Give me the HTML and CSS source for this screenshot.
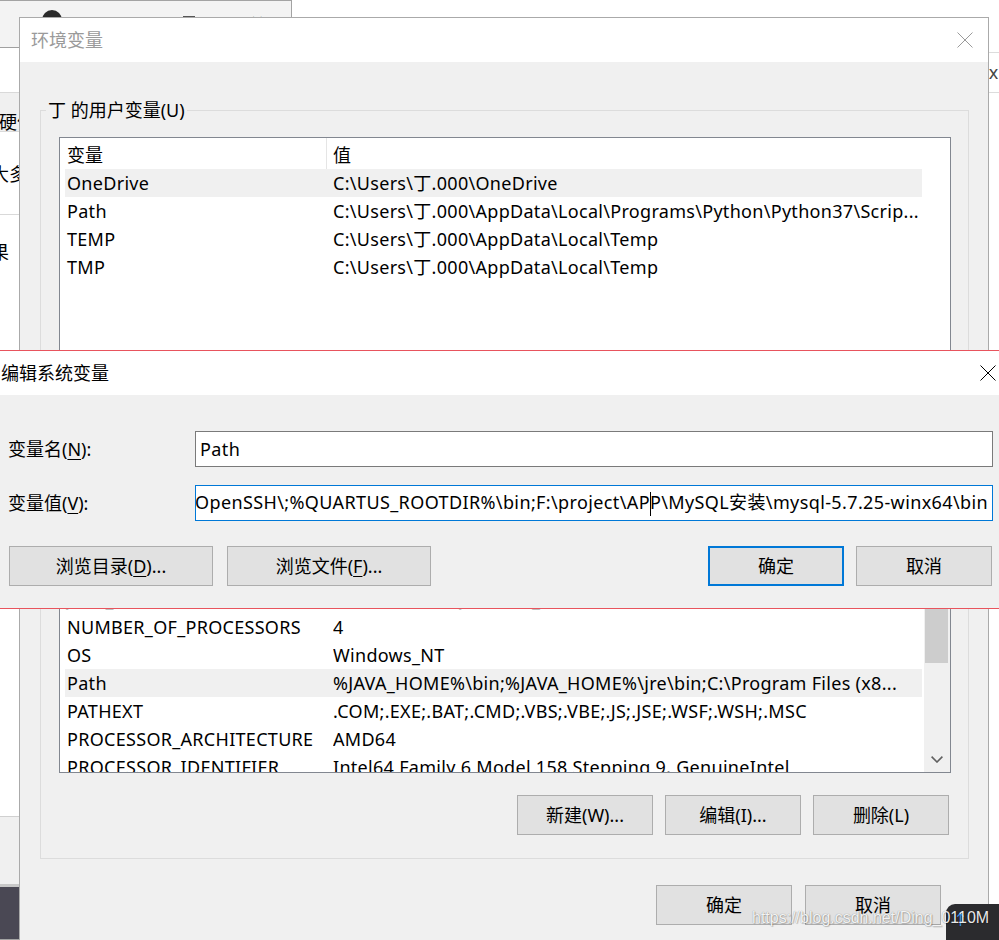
FILE: index.html
```html
<!DOCTYPE html>
<html lang="zh-CN">
<head>
<meta charset="utf-8">
<title>编辑系统变量</title>
<link rel="stylesheet" href="styles.css">
</head>
<body>
<div class="desk">

  <div class="bg-left">
    <div class="bl-title">
      <span class="bl-circle"></span>
      <span class="bl-square"></span>
      <span class="bl-x">×</span>
    </div>
    <div class="bl-white"></div>
    <div class="bl-tabs"><span class="bl-txt t1">硬件</span></div>
    <div class="bl-row r1"><span class="bl-txt t2">大多</span></div>
    <div class="bl-row r2"><span class="bl-txt t3">果</span></div>
    <div class="bl-fill"></div>
    <div class="bl-gray"></div>
    <div class="bl-dark"></div>
  </div>

  <div class="bg-right">
    <div class="br-row"><span class="br-txt">ıx</span></div>
  </div>

  <div class="win env">
    <div class="titlebar env-title">
      <span class="title inactive">环境变量</span>
      <svg class="close env-close" width="16" height="16" viewBox="0 0 16 16"><path d="M0.5 0.5 L15.5 15.5 M15.5 0.5 L0.5 15.5" stroke="#9a9a9a" stroke-width="1" fill="none"/></svg>
    </div>
    <div class="env-body">
      <div class="group user-group">
        <div class="group-label">丁 的用户变量(U)</div>
        <div class="list user-list">
          <div class="list-main">
            <div class="lhead"><div class="hc1">变量</div><div class="hc2">值</div></div>
            <div class="lrow sel"><span class="c1">OneDrive</span><span class="c2">C:\Users\丁.000\OneDrive</span></div>
            <div class="lrow"><span class="c1">Path</span><span class="c2">C:\Users\丁.000\AppData\Local\Programs\Python\Python37\Scrip...</span></div>
            <div class="lrow"><span class="c1">TEMP</span><span class="c2">C:\Users\丁.000\AppData\Local\Temp</span></div>
            <div class="lrow"><span class="c1">TMP</span><span class="c2">C:\Users\丁.000\AppData\Local\Temp</span></div>
          </div>
        </div>
        <div class="btnrow">
          <button class="btn">新建(N)...</button>
          <button class="btn">编辑(E)...</button>
          <button class="btn">删除(D)</button>
        </div>
      </div>

      <div class="group sys-group">
        <div class="group-label">系统变量(S)</div>
        <div class="list sys-list">
          <div class="list-main">
            <div class="lhead"><div class="hc1">变量</div><div class="hc2">值</div></div>
            <div class="lrow"><span class="c1">ComSpec</span><span class="c2">C:\WINDOWS\system32\cmd.exe</span></div>
            <div class="lrow"><span class="c1">DriverData</span><span class="c2">C:\Windows\System32\Drivers\DriverData</span></div>
            <div class="lrow"><span class="c1">JAVA_HOME</span><span class="c2">D:\SOFTWARE\JDK1.8.0_191</span></div>
            <div class="lrow"><span class="c1">NUMBER_OF_PROCESSORS</span><span class="c2">4</span></div>
            <div class="lrow"><span class="c1">OS</span><span class="c2">Windows_NT</span></div>
            <div class="lrow sel"><span class="c1">Path</span><span class="c2">%JAVA_HOME%\bin;%JAVA_HOME%\jre\bin;C:\Program Files (x8...</span></div>
            <div class="lrow"><span class="c1">PATHEXT</span><span class="c2">.COM;.EXE;.BAT;.CMD;.VBS;.VBE;.JS;.JSE;.WSF;.WSH;.MSC</span></div>
            <div class="lrow"><span class="c1">PROCESSOR_ARCHITECTURE</span><span class="c2">AMD64</span></div>
            <div class="lrow"><span class="c1">PROCESSOR_IDENTIFIER</span><span class="c2">Intel64 Family 6 Model 158 Stepping 9, GenuineIntel</span></div>
          </div>
          <div class="vscroll">
            <div class="sb-btn"></div>
            <div class="sb-thumb"></div>
            <div class="sb-track"></div>
            <div class="sb-btn sb-down">
              <svg width="12" height="7" viewBox="0 0 12 7"><path d="M0.6 0.6 L6 6 L11.4 0.6" stroke="#606060" stroke-width="1.6" fill="none"/></svg>
            </div>
          </div>
        </div>
        <div class="btnrow">
          <button class="btn">新建(W)...</button>
          <button class="btn">编辑(I)...</button>
          <button class="btn">删除(L)</button>
        </div>
      </div>

      <div class="btnrow dlg-btns">
        <button class="btn">确定</button>
        <button class="btn">取消</button>
      </div>
    </div>
  </div>

  <div class="win edit">
    <div class="titlebar edit-title">
      <span class="title">编辑系统变量</span>
      <svg class="close edit-close" width="16" height="16" viewBox="0 0 16 16"><path d="M0.5 0.5 L15.5 15.5 M15.5 0.5 L0.5 15.5" stroke="#000" stroke-width="1" fill="none"/></svg>
    </div>
    <div class="edit-body">
      <div class="form">
        <label class="flabel">变量名(<u>N</u>):</label>
        <div class="field"><span class="ftext">Path</span></div>
        <label class="flabel">变量值(<u>V</u>):</label>
        <div class="field focus"><span class="ftext">2\OpenSSH\;%QUARTUS_ROOTDIR%\bin;F:\project\AP<span class="caret"></span>P\MySQL安装\mysql-5.7.25-winx64\bin</span></div>
      </div>
      <div class="edit-btns">
        <button class="btn wide">浏览目录(<u>D</u>)...</button>
        <button class="btn wide">浏览文件(<u>F</u>)...</button>
        <span class="spacer"></span>
        <button class="btn default">确定</button>
        <button class="btn">取消</button>
      </div>
    </div>
  </div>

  <div class="netspeed"><span class="ns-up">↑</span></div>
  <div class="watermark">https://blog.csdn.net/Ding_0110M</div>
</div>
</body>
</html>
```

FILE: styles.css
```css
* { box-sizing: border-box; }
html, body { margin: 0; padding: 0; }
body {
  width: 999px;
  height: 940px;
  overflow: hidden;
  background: #fff;
  font-family: "Noto Sans", "Noto Sans CJK SC", sans-serif;
  font-size: 18px;
  color: #000;
}
.desk {
  position: relative;
  width: 999px;
  height: 940px;
  overflow: hidden;
  background: #fff;
}

/* ---------- background window, left ---------- */
.bg-left {
  position: absolute;
  left: -10px;
  top: 0;
  width: 302px;
  height: 940px;
  border: 1px solid #a3a3a3;
  background: #fff;
  display: flex;
  flex-direction: column;
}
.bl-title {
  height: 47px;
  flex: none;
  background: #f3f3f3;
  border-bottom: 1px solid #a0a0a0;
  display: flex;
  align-items: flex-start;
  padding-top: 9px;
}
.bl-circle {
  width: 20px; height: 20px; border-radius: 50%;
  background: #2b2b2b; margin-left: 51px;
}
.bl-square {
  width: 12px; height: 12px; border: 1px solid #555;
  margin-left: 121px; margin-top: 6px;
}
.bl-x {
  margin-left: 56px; margin-top: -1px; font-size: 22px; line-height: 22px; color: #555;
}
.bl-white { height: 44px; flex: none; }
.bl-tabs {
  height: 40px; flex: none;
  border-top: 1px solid #d9d9d9;
  border-bottom: 1px solid #d9d9d9;
  background: #f0f0f0;
  line-height: 20px;
  padding-top: 19px;
}
.bl-txt { display: block; white-space: nowrap; }
.t1 { margin-left: 8px; }
.bl-row { flex: none; }
.r1 { height: 83px; padding-top: 30px; line-height: 24px; border-bottom: 1px solid #d9d9d9; }
.t2 { margin-left: 0px; }
.r2 { height: 60px; padding-top: 25px; line-height: 24px; }
.t3 { margin-left: 0px; }
.bl-fill { flex: none; height: 542px; border-bottom: 1px solid #d0d0d0; }
.bl-gray { flex: none; height: 70px; background: #f0f0f0; border-bottom: 3px solid #c8c8c8; }
.bl-dark { flex: 1; background: #4a4854; }

/* ---------- background window, right ---------- */
.bg-right {
  position: absolute;
  left: 980px;
  top: 0;
  width: 30px;
  height: 940px;
  background: #fff;
  padding-top: 52px;
}
.br-row {
  height: 41px;
  border-top: 1px solid #dcdcdc;
  border-bottom: 1px solid #dcdcdc;
  line-height: 39px;
  color: #444;
  padding-left: 4px;
}

/* ---------- generic window ---------- */
.win {
  position: absolute;
  background: #f0f0f0;
  display: flex;
  flex-direction: column;
}
.titlebar {
  flex: none;
  height: 44px;
  background: #fff;
  display: flex;
  align-items: center;
  padding-left: 11px;
}
.title { line-height: 24px; white-space: nowrap; }
.title.inactive { color: #9a9a9a; }
.close { margin-left: auto; flex: none; }

/* ---------- environment variables dialog ---------- */
.env {
  left: 19px;
  top: 17px;
  width: 970px;
  height: 960px;
  border: 1px solid #aaaaaa;
}
.env-close { margin-right: 15px; margin-top: 0; }
.env-body {
  flex: 1;
  padding: 48px 19px 0 20px;
}
.group {
  border: 1px solid #dcdcdc;
  padding: 0 17px 23px 18px;
  display: flex;
  flex-direction: column;
}
.group-label {
  align-self: flex-start;
  margin: -13px 0 0 -13px;
  padding: 0 2px;
  background: #f0f0f0;
  line-height: 24px;
  height: 24px;
  white-space: nowrap;
}
.sys-group { margin-top: 26px; }

.list {
  margin-top: 15px;
  border: 1px solid #828790;
  background: #fff;
  display: flex;
  overflow: hidden;
  letter-spacing: 0.3px;
}
.user-list { height: 220px; }
.sys-list { height: 276px; }
.list-main { flex: 1; min-width: 0; overflow: hidden; }
.lhead { display: flex; height: 31px; line-height: 28px; padding-top: 3px; letter-spacing: 0; }
.hc1 { width: 267px; padding-left: 7px; border-right: 1px solid #e5e5e5; margin-top: -3px; padding-top: 3px; }
.hc2 { padding-left: 6px; }
.lrow {
  display: flex;
  height: 28px;
  line-height: 28px;
  margin-left: 5px;
  width: 857px;
  white-space: nowrap;
}
.lrow.sel { background: #f0f0f0; }
.c1 { width: 268px; flex: none; padding-left: 2px; overflow: hidden; }
.c2 { flex: 1; min-width: 0; overflow: hidden; }

.vscroll {
  width: 26px;
  flex: none;
  background: #f0f0f0;
  display: flex;
  flex-direction: column;
}
.sb-btn { height: 26px; flex: none; display: flex; align-items: center; justify-content: center; }
.sb-thumb { height: 139px; flex: none; margin: 0 2px 0 1px; background: #cdcdcd; }
.sb-track { flex: 1; }

.btnrow {
  display: flex;
  justify-content: flex-end;
  gap: 12px;
  margin-top: 23px;
  padding-right: 2px;
}
.sys-group .btnrow { margin-top: 22px; }
.dlg-btns { margin-top: 26px; padding-right: 28px; gap: 13px; }

.btn {
  font: inherit;
  color: #000;
  width: 136px;
  height: 40px;
  border: 1px solid #adadad;
  background: #e1e1e1;
  line-height: 36px;
  padding: 0;
  margin: 0;
  white-space: nowrap;
}
.btn u { text-decoration-thickness: 1px; text-underline-offset: 3px; }

/* ---------- edit dialog ---------- */
.edit {
  left: -11px;
  top: 350px;
  width: 1021px;
  height: 259px;
  border: 1px solid #e8545d;
}
.edit-close { margin-right: 13px; }
.edit-body {
  flex: 1;
  padding: 36px 16px 0 18px;
}
.form {
  display: grid;
  grid-template-columns: 187px 1fr;
  grid-auto-rows: 36px;
  row-gap: 18px;
  align-items: center;
}
.flabel { line-height: 24px; white-space: nowrap; }
.flabel u { text-decoration-thickness: 1px; text-underline-offset: 3px; }
.field {
  height: 36px;
  border: 1px solid #7a7a7a;
  background: #fff;
  display: flex;
  align-items: center;
  padding: 0 4px;
  overflow: hidden;
  white-space: nowrap;
  letter-spacing: 0.38px;
}
.field.focus { border-color: #0078d7; justify-content: flex-end; }
.ftext { flex: none; line-height: 24px; }
.caret {
  display: inline-block;
  width: 1px;
  height: 24px;
  background: #000;
  vertical-align: middle;
  margin-right: -1px;
}
.edit-btns {
  display: flex;
  margin-top: 25px;
  padding: 0 1px;
}
.edit-btns .btn + .btn { margin-left: 14px; }
.edit-btns .btn.default + .btn { margin-left: 12px; }
.spacer { flex: 1; }
.btn.wide { width: 204px; }
.btn.default { border: 2px solid #0078d7; }

/* ---------- overlays ---------- */
.netspeed {
  position: absolute;
  left: 946px;
  top: 904px;
  width: 90px;
  height: 50px;
  border-radius: 9px;
  background: #2b2b2e;
  color: #e8e8e8;
  font-size: 15px;
  line-height: 30px;
  padding-left: 7px;
  padding-top: 0;
  white-space: nowrap;
}
.ns-up { color: #3aa0ff; }
.watermark {
  position: absolute;
  left: 752px;
  top: 906px;
  font-family: "Liberation Sans", sans-serif;
  font-size: 16px;
  line-height: 24px;
  color: rgba(255,255,255,0.92);
  text-shadow: 0 0 1px rgba(0,0,0,0.45), 1px 1px 1px rgba(0,0,0,0.2);
  white-space: nowrap;
}
```
